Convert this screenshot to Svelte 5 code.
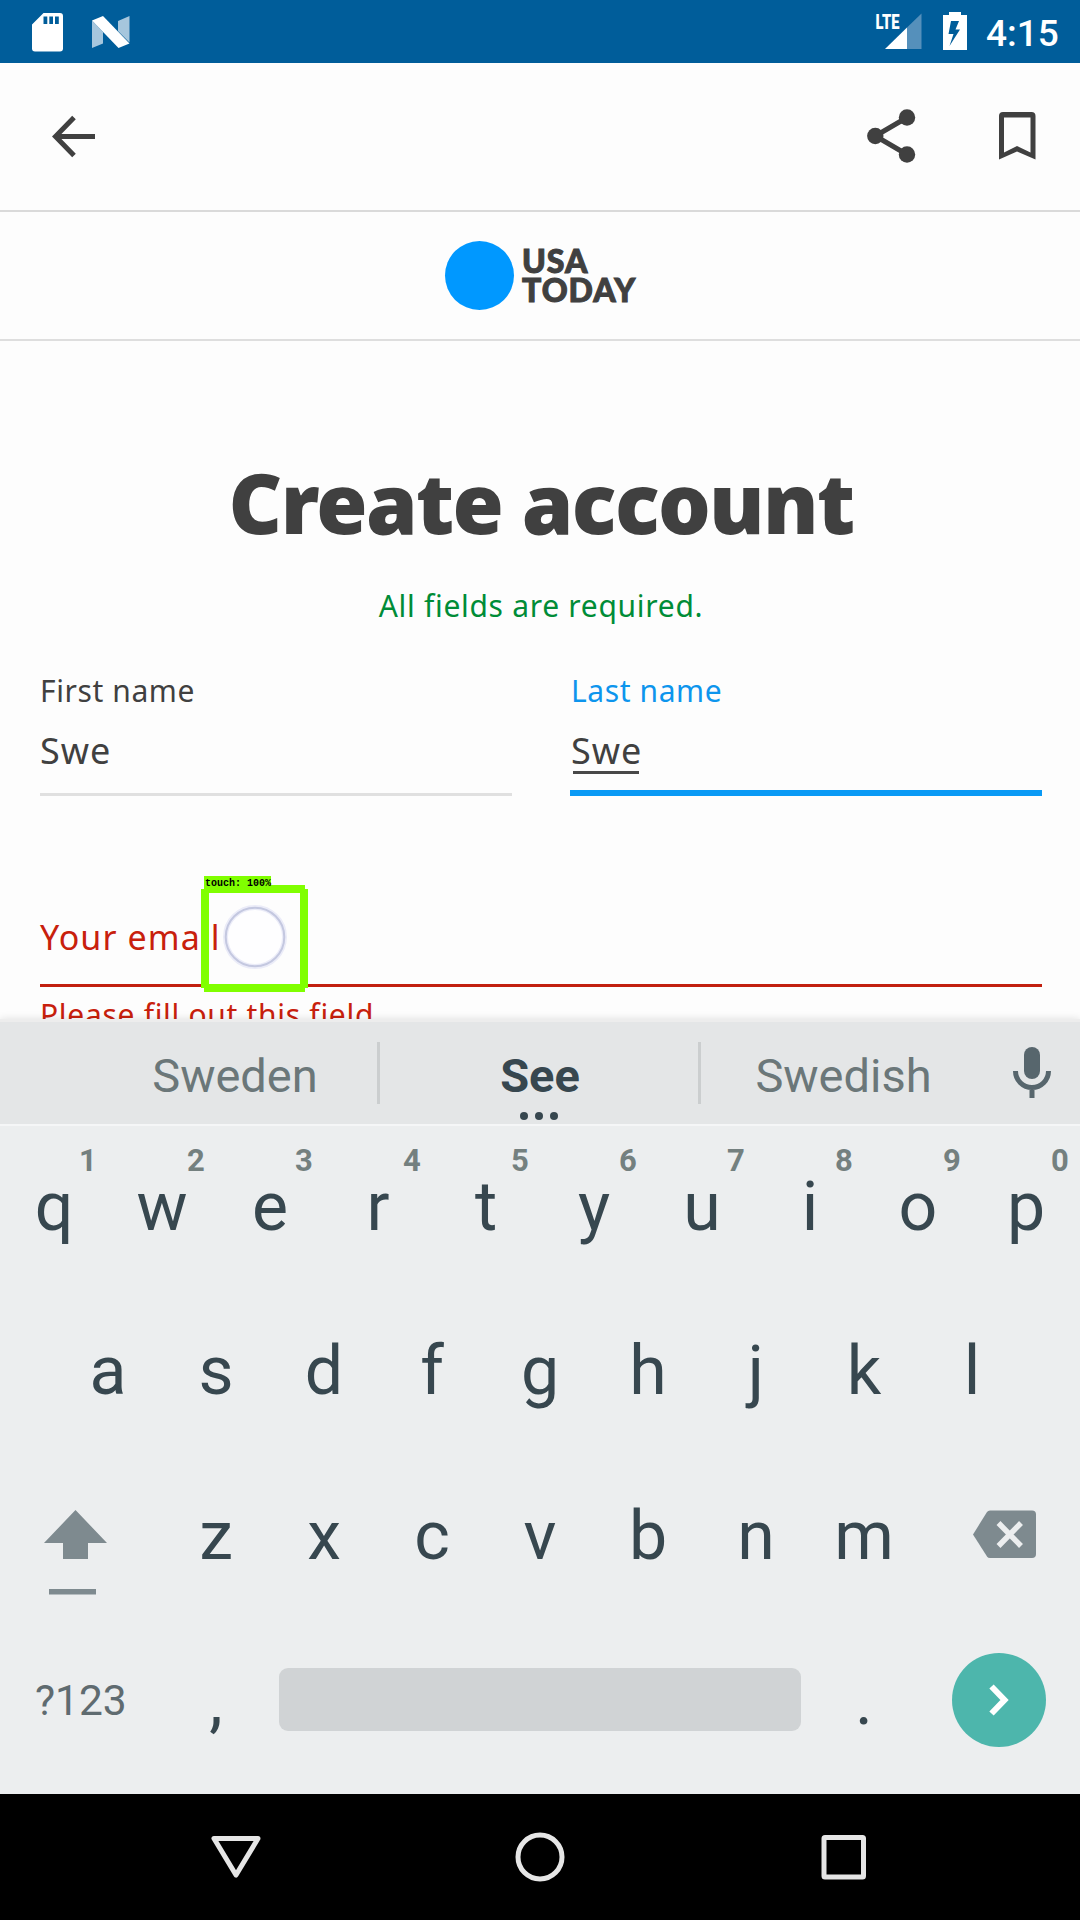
<script>
  const topKeys = [...'qwertyuiop'].map((letter, i) => ({ letter, hint: (i + 1) % 10 }));
  const homeKeys = [...'asdfghjkl'];
  const lowerKeys = [...'zxcvbnm'];
</script>

<div class="screen">
  <header class="status">
    <svg class="status-left" width="140" height="63" viewBox="0 0 140 63">
      <path fill="#fff" fill-rule="evenodd" d="M43.5 13H60a3 3 0 0 1 3 3v32.500a3 3 0 0 1-3 3H35a3 3 0 0 1-3-3V24.500ZM43.500 16.500V24H47.300V16.500ZM49.300 16.500V24H53V16.500ZM55 16.500V24H58.800V16.500Z" />
      <path fill="#a6c6dd" d="M92 20.500 103 32V43.500L92 48ZM118 21 129.500 16V42.500L118 31Z" />
      <path fill="#fff" d="M92 20.500 103 16 129.500 43.500 118.500 48Z" />
    </svg>
    <div class="status-right">
      <svg width="110" height="63" viewBox="870 0 110 63">
        <text class="lte" x="875.500" y="29" textLength="24" lengthAdjust="spacingAndGlyphs">LTE</text>
        <path fill="#5590bb" d="M907 27.500 921.500 13.500V49H907Z" />
        <path fill="#fff" d="M907 27.500V49H885Z" />
        <path fill="#fff" fill-rule="evenodd" d="M949 12H961V15H967V50H943V15H949ZM951 21 948.500 34H953.500L949.500 46 960 29.500H955.500L959 21Z" />
      </svg>
      <span class="clock">4:15</span>
    </div>
  </header>

  <nav class="toolbar">
    <svg width="60" height="60" viewBox="44 107 60 60" fill="none" stroke="#404040" stroke-width="5">
      <path d="M74 117.500 55.500 136.500 74 155.500M57 136.500H95" />
    </svg>
    <div class="actions">
      <svg width="60" height="60" viewBox="861 107 60 60" fill="#404040">
        <path d="M907 117.500 875.300 136 907 154.500" fill="none" stroke="#404040" stroke-width="5" />
        <circle cx="875.300" cy="136" r="8.200" /><circle cx="907" cy="117.500" r="8.200" /><circle cx="907" cy="154.500" r="8.200" />
      </svg>
      <svg width="60" height="60" viewBox="987 107 60 60">
        <path fill="#404040" fill-rule="evenodd" d="M1003 112H1031.500A4 4 0 0 1 1035.500 116V159.500L1017 151.500 999 159.500V116A4 4 0 0 1 1003 112ZM1004 117.500V152.500L1017 146 1030.500 152.500V117.500Z" />
      </svg>
    </div>
  </nav>

  <div class="brand">
    <span class="dot"></span>
    <span class="wordmark"><span>USA</span><span>TODAY</span></span>
  </div>

  <main>
    <h1>Create account</h1>
    <p class="note">All fields are required.</p>
    <div class="names">
      <label class="field">
        <span class="caption">First name</span>
        <span class="value">Swe</span>
      </label>
      <label class="field active">
        <span class="caption">Last name</span>
        <span class="value"><span class="composing">Swe</span></span>
      </label>
    </div>
    <div class="email">Your email</div>
    <p class="error">Please fill out this field</p>

    <div class="touch">
      <svg width="107" height="107" viewBox="0 0 107 107">
        <path fill="#80ff00" fill-rule="evenodd" d="M3 0H104V4H107V103H104V107H3V103H0V4H3ZM8 8V99H99V8Z" />
        <circle cx="54" cy="52" r="29.500" fill="#fefeff" stroke="#ebecf8" stroke-width="5" />
        <circle cx="54" cy="52" r="29.300" fill="none" stroke="#c4c8e0" stroke-width="2" />
      </svg>
      <span class="tag">touch: 100%</span>
    </div>
  </main>

  <section class="keyboard">
    <div class="suggestions">
      <span class="word">Sweden</span>
      <i></i>
      <span class="word best">See<span class="more"><b></b><b></b><b></b></span></span>
      <i></i>
      <span class="word">Swedish</span>
      <svg width="96" height="102" viewBox="984 1022 96 102">
        <rect x="1024" y="1047" width="16" height="32" rx="8" fill="#57666d" />
        <path d="M1015.500 1071a16.500 16.500 0 0 0 33 0M1032 1087V1098" fill="none" stroke="#57666d" stroke-width="5" />
      </svg>
    </div>

    <div class="row first">
      {#each topKeys as key}
        <span class="key">{key.letter}<small>{key.hint}</small></span>
      {/each}
    </div>
    <div class="row">
      {#each homeKeys as key}
        <span class="key">{key}</span>
      {/each}
    </div>
    <div class="row">
      <svg width="162" height="165" viewBox="0 1454 162 165" fill="#7e8a8f">
        <path d="M75.500 1510 107 1543H88V1559H63V1543H44Z" />
        <rect x="49" y="1589" width="47" height="5.500" />
      </svg>
      {#each lowerKeys as key}
        <span class="key">{key}</span>
      {/each}
      <svg width="162" height="165" viewBox="918 1454 162 165">
        <path fill="#7e8a8f" d="M990 1510.500H1032a4 4 0 0 1 4 4V1554a4 4 0 0 1-4 4H990Q988 1558 987 1556.500L973 1534.500 987 1512Q988 1510.500 990 1510.500Z" />
        <path d="M998.500 1523 1021 1546M1021 1523 998.500 1546" stroke="#eceeef" stroke-width="5.500" />
      </svg>
    </div>
    <div class="row bottom">
      <span class="symbols">?123</span>
      <span class="key punct">,</span>
      <span class="space"></span>
      <span class="key punct">.</span>
      <span class="enter">
        <svg width="94" height="94" viewBox="951 1653 94 94">
          <path d="M990.500 1686.500 1003.500 1700 990.500 1713.500" fill="none" stroke="#fff" stroke-width="6" />
        </svg>
      </span>
    </div>
  </section>

  <footer>
    <svg width="304" height="126" viewBox="84 1794 304 126"><path d="M214 1838.500H258L236 1875Z" /></svg>
    <svg width="304" height="126" viewBox="388 1794 304 126"><circle cx="540" cy="1857" r="22" /></svg>
    <svg width="304" height="126" viewBox="692 1794 304 126"><rect x="824" y="1837.500" width="39.500" height="39.500" rx="1" /></svg>
  </footer>
</div>

<style>
  :global(body) { margin: 0; background: #000; }
  .screen { width: 1080px; height: 1920px; display: flex; flex-direction: column; overflow: hidden; background: #fdfdfd; color: #404040; font-family: "Noto Sans", sans-serif; }
  svg { display: block; flex: none; }
  h1, p { margin: 0; }

  .status { height: 63px; flex: none; display: flex; justify-content: space-between; background: #005d9a; color: #fff; }
  .status-right { display: flex; padding-right: 21px; }
  .lte { font: 900 21px Roboto, sans-serif; fill: #fff; }
  .clock { width: 73px; margin-left: 6px; font: 500 37px/67px Roboto, sans-serif; white-space: nowrap; }

  .toolbar { height: 149px; flex: none; box-sizing: border-box; padding: 0 33px 0 44px; display: flex; align-items: center; justify-content: space-between; border-bottom: 2px solid #dadada; }
  .actions { display: flex; gap: 66px; }

  .brand { height: 129px; flex: none; box-sizing: border-box; padding-left: 445px; display: flex; align-items: center; border-bottom: 2px solid #dedede; }
  .dot { width: 69px; height: 69px; border-radius: 50%; background: #0098ff; }
  .wordmark { display: flex; flex-direction: column; margin-left: 8px; padding-bottom: 2px; font-family: Lato, sans-serif; font-size: 32px; font-weight: 900; line-height: 29px; letter-spacing: 1px; -webkit-text-stroke: 1px #404040; }

  main { height: 678px; flex: none; position: relative; overflow: hidden; box-sizing: border-box; padding: 101px 38px 0 40px; }
  h1 { height: 120px; font-size: 83px; line-height: 120px; font-weight: 900; text-align: center; white-space: nowrap; letter-spacing: -1.7px; }
  .note { height: 40px; margin-top: 24px; font-size: 30px; line-height: 40px; text-align: center; color: #008c37; letter-spacing: 0.7px; font-weight: 450; }
  .names { display: flex; gap: 58px; margin-top: 45px; }
  .field { width: 472px; height: 125px; box-sizing: border-box; display: flex; flex-direction: column; border-bottom: 3px solid #e0e0e0; }
  .caption { height: 40px; font-size: 30px; line-height: 40px; letter-spacing: 0.6px; font-weight: 450; }
  .value { height: 60px; margin-top: 10px; font-size: 36px; line-height: 60px; letter-spacing: 1px; font-weight: 450; }
  .active { border-bottom: 6px solid #0a9af5; }
  .active .caption, .active .value { padding-left: 1px; }
  .active .caption { color: #0d95ed; }
  .composing { position: relative; }
  .composing::after { content: ""; position: absolute; left: 2px; bottom: 1px; width: 66px; height: 3px; background: #484848; }
  .email { height: 79px; margin-top: 112px; font-size: 34px; line-height: 58px; border-bottom: 3px solid #c2200f; box-sizing: border-box; color: #c8200c; letter-spacing: 1.1px; font-weight: 450; }
  .error { height: 40px; margin-top: 8px; font-size: 30px; line-height: 40px; color: #c8200c; letter-spacing: 0.7px; font-weight: 450; }
  .touch { position: absolute; left: 201px; top: 544px; }
  .tag { position: absolute; left: 3px; top: -9px; width: 67px; height: 11px; background: #80ff00; color: #000; font: 700 10px/15px "Liberation Mono", monospace; white-space: nowrap; text-indent: 1px; }

  .keyboard { height: 775px; flex: none; box-sizing: border-box; position: relative; border-top: 3px solid #ededed; background: #eceeef; box-shadow: 0 0 8px rgba(0, 0, 0, 0.12); font-family: Roboto, sans-serif; color: #37474f; }
  .suggestions { height: 104px; box-sizing: border-box; padding-left: 91px; display: grid; grid-template-columns: 286px 3px 318px 3px 283px 96px; align-items: center; background: #e4e6e7; border-bottom: 2px solid #f5f6f7; }
  .suggestions i { height: 62px; background: #cbcecf; }
  .word { position: relative; padding: 6px 0 0 2px; font-size: 47px; line-height: 60px; text-align: center; color: #6b7779; }
  .best { font-weight: 700; color: #37474f; }
  .more { position: absolute; left: 140px; bottom: -14px; display: flex; gap: 7px; }
  .more b { width: 8px; height: 8px; border-radius: 50%; background: #37474f; }

  .row { height: 165px; display: flex; align-items: center; justify-content: center; }
  .first { height: 163px; }
  .key { position: relative; width: 108px; height: 165px; font-size: 68px; line-height: 165px; text-align: center; }
  .key small { position: absolute; right: -1px; top: 18px; width: 42px; font-size: 31px; line-height: 36px; font-weight: 700; color: #74807f; }
  .bottom { height: 161px; justify-content: flex-start; }
  .symbols { width: 162px; box-sizing: border-box; padding: 2px 0 0 35px; font-size: 42.5px; color: #5f6b70; }
  .space { width: 522px; height: 63px; margin: 0 9px; border-radius: 9px; background: #d0d3d5; }
  .punct { width: 108px; height: 161px; }
  .enter { width: 94px; height: 94px; margin-left: 34px; border-radius: 50%; background: #4db6ac; }

  footer { height: 126px; flex: none; display: flex; justify-content: center; background: #000; fill: none; stroke: #e6e6e6; stroke-width: 5; stroke-linejoin: round; }
</style>
